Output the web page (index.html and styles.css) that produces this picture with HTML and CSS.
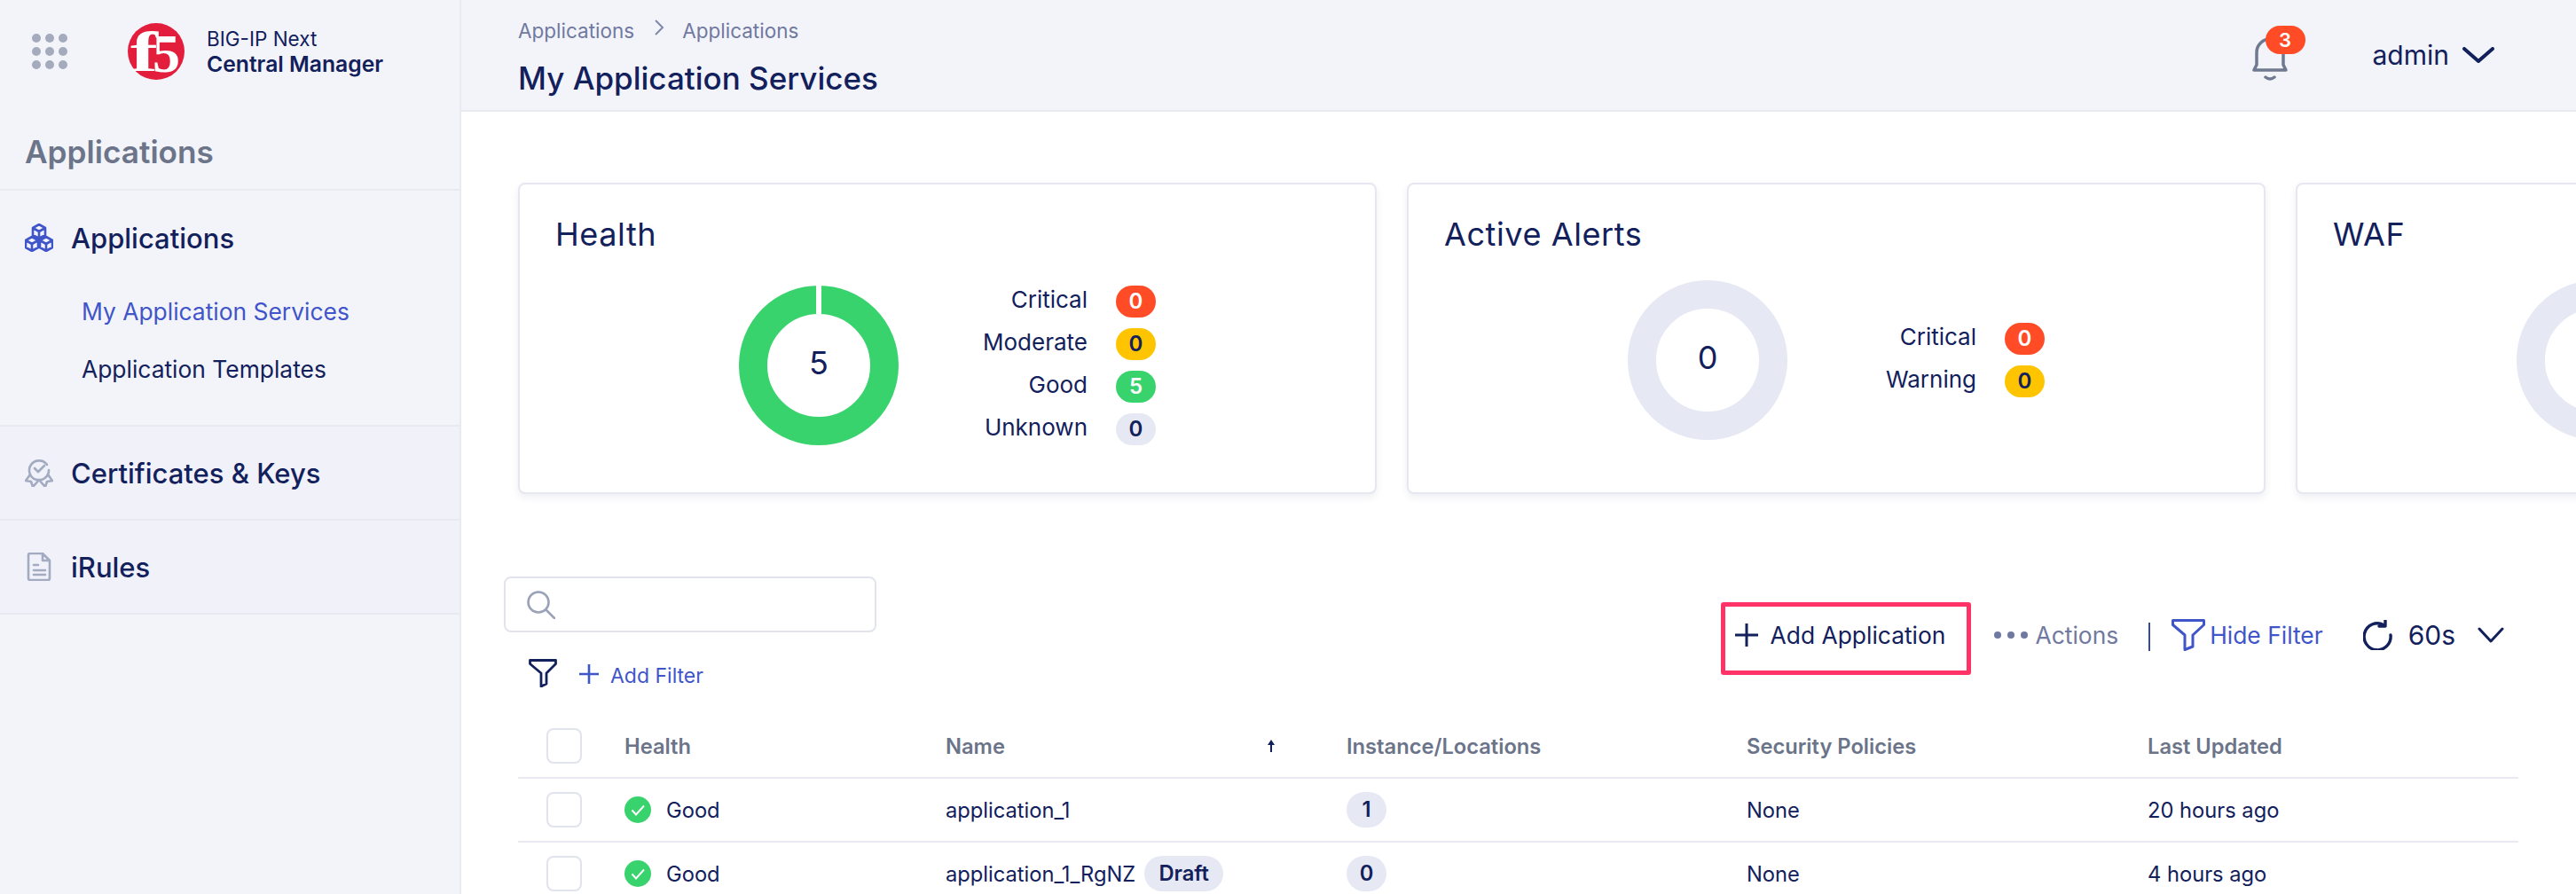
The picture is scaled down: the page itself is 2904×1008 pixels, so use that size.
FILE: index.html
```html
<!DOCTYPE html>
<html lang="en">
<head>
<meta charset="utf-8">
<title>My Application Services</title>
<link rel="stylesheet" href="styles.css">
</head>
<body>
<div class="app">
  <aside class="sidebar">
    <div class="brand">
      <div class="dots"><i></i><i></i><i></i><i></i><i></i><i></i><i></i><i></i><i></i></div>
      <svg class="logo" viewBox="0 0 64 64"><circle cx="32" cy="32" r="32" fill="#e31d3c"/><text class="logo-f" transform="scale(1.45 1)" x="2" y="54">f</text><text class="logo-5" x="28" y="55">5</text></svg>
      <div class="brand-text"><div class="brand-top">BIG-IP Next</div><div class="brand-bottom">Central Manager</div></div>
    </div>
    <div class="side-title">Applications</div>
    <section class="nav-section nav-open">
      <div class="nav-head">
        <svg class="nav-icon" viewBox="0 0 32 32" fill="none" stroke="#3f55c9" stroke-width="2.6" stroke-linejoin="round"><path d="M16 1l7 4v8l-7 4-7-4V5zM9 5l7 4 7-4M16 9v8"/><path d="M8 15l7 4v8l-7 4-7-4v-8zM1 19l7 4 7-4M8 23v8"/><path d="M24 15l7 4v8l-7 4-7-4v-8zM17 19l7 4 7-4M24 23v8"/></svg>
        <span>Applications</span>
      </div>
      <ul class="sub-list">
        <li class="sub-item sub-active">My Application Services</li>
        <li class="sub-item">Application Templates</li>
      </ul>
    </section>
    <section class="nav-section">
      <div class="nav-head">
        <svg class="nav-icon" viewBox="0 0 32 32" fill="none" stroke="#a3abc2" stroke-width="2.6" stroke-linejoin="round" stroke-linecap="round"><path d="M25 7A11 11 0 1 0 27 13"/><path d="M11 11l4 4 7-7"/><path d="M6 18L1 25l6 1 2 6 7-8 7 8 2-6 6-1-5-7"/></svg>
        <span>Certificates &amp; Keys</span>
      </div>
    </section>
    <section class="nav-section nav-last">
      <div class="nav-head">
        <svg class="nav-icon" viewBox="0 0 32 32" fill="none" stroke="#a3abc2" stroke-width="2.6" stroke-linejoin="round" stroke-linecap="round"><path d="M6 1h14l8 8v20a2 2 0 0 1-2 2H6a2 2 0 0 1-2-2V3a2 2 0 0 1 2-2zM20 1v8h8M10 14h5M10 20h13M10 25h13"/></svg>
        <span>iRules</span>
      </div>
    </section>
  </aside>

  <main class="main">
    <header class="topbar">
      <div class="crumbs-wrap">
        <div class="crumbs"><span>Applications</span><svg class="crumb-sep" viewBox="0 0 12 20" fill="none" stroke="#7f88a8" stroke-width="2"><path d="M2 2l8 8-8 8"/></svg><span>Applications</span></div>
        <h1 class="page-title">My Application Services</h1>
      </div>
      <div class="top-right">
        <div class="bell">
          <svg viewBox="0 0 40 56" fill="none" stroke="#6f7a90" stroke-width="3.500" stroke-linecap="round" stroke-linejoin="round"><path d="M2 40h36l-3-6V20a15 15 0 0 0-30 0v14zM15 48q5 4 10 0"/></svg>
          <span class="bell-badge">3</span>
        </div>
        <span class="user">admin</span>
        <svg class="user-chev" viewBox="0 0 36 18" fill="none" stroke="#12205c" stroke-width="4" stroke-linecap="round" stroke-linejoin="round"><path d="M2 2l16 14L34 2"/></svg>
      </div>
    </header>

    <div class="cards">
      <article class="card">
        <h2 class="card-title">Health</h2>
        <div class="card-body body-health">
          <div class="donut donut-good"><span>5</span></div>
          <div class="legend">
            <div class="legend-row"><span>Critical</span><b class="pill pill-red">0</b></div>
            <div class="legend-row"><span>Moderate</span><b class="pill pill-yellow">0</b></div>
            <div class="legend-row"><span>Good</span><b class="pill pill-green">5</b></div>
            <div class="legend-row"><span>Unknown</span><b class="pill pill-grey">0</b></div>
          </div>
        </div>
      </article>
      <article class="card">
        <h2 class="card-title">Active Alerts</h2>
        <div class="card-body body-alerts">
          <div class="donut"><span>0</span></div>
          <div class="legend">
            <div class="legend-row"><span>Critical</span><b class="pill pill-red">0</b></div>
            <div class="legend-row"><span>Warning</span><b class="pill pill-yellow">0</b></div>
          </div>
        </div>
      </article>
      <article class="card">
        <h2 class="card-title">WAF</h2>
        <div class="card-body body-alerts">
          <div class="donut"></div>
          <div class="legend"></div>
        </div>
      </article>
    </div>

    <div class="controls">
      <div class="controls-left">
        <div class="search">
          <svg viewBox="0 0 32 32" fill="none" stroke="#9aa2b8" stroke-width="2.600" stroke-linecap="round"><circle cx="13" cy="13" r="11.500"/><path d="M22 22l9 9"/></svg>
        </div>
        <div class="filter-row">
          <svg class="filter-icon" viewBox="0 0 32 32" fill="none" stroke="#12205c" stroke-width="2.800" stroke-linejoin="round"><path d="M1.500 1.500h29v4L20 16v12l-6 3V16L1.500 5.500z"/></svg>
          <svg class="add-plus" viewBox="0 0 22 22" fill="none" stroke="#3f55c9" stroke-width="2.600"><path d="M11 0v22M0 11h22"/></svg>
          <span class="add-filter">Add Filter</span>
        </div>
      </div>
      <div class="toolbar">
        <div class="add-box">
          <svg viewBox="0 0 26 26" fill="none" stroke="#12205c" stroke-width="3"><path d="M13 0v26M0 13h26"/></svg>
          <span>Add Application</span>
        </div>
        <div class="tool tool-actions">
          <div class="three-dots"><i></i><i></i><i></i></div>
          <span>Actions</span>
        </div>
        <div class="tool-divider"></div>
        <div class="tool tool-hide">
          <svg viewBox="0 0 38 36" fill="none" stroke="#3f55c9" stroke-width="3" stroke-linejoin="round"><path d="M1.500 1.500h35v5L24 18v13l-9 3.500V18L1.500 6.500z"/></svg>
          <span>Hide Filter</span>
        </div>
        <div class="tool tool-refresh">
          <svg viewBox="0 0 34 34" fill="none" stroke="#12205c" stroke-width="3.400" stroke-linecap="round" stroke-linejoin="round"><path d="M23 5.500A15 15 0 1 0 31 17"/><path d="M25 0v7h-7"/></svg>
          <span>60s</span>
          <svg class="refresh-chev" viewBox="0 0 30 18" fill="none" stroke="#12205c" stroke-width="3" stroke-linecap="round" stroke-linejoin="round"><path d="M2 2l13 14L28 2"/></svg>
        </div>
      </div>
    </div>

    <div class="table">
      <div class="row row-head">
        <div class="cell-check"><span class="check"></span></div>
        <div>Health</div>
        <div class="name-head">Name<svg class="sort" viewBox="0 0 10 14" fill="#12205c"><path d="M5 0l4 6H6v8H4V6H1z"/></svg></div>
        <div>Instance/Locations</div>
        <div>Security Policies</div>
        <div>Last Updated</div>
      </div>
      <div class="row">
        <div class="cell-check"><span class="check"></span></div>
        <div class="health-cell"><svg class="ok" viewBox="0 0 30 30"><circle cx="15" cy="15" r="15" fill="#39d36e"/><path d="M8.500 15.500l4.500 5 9-10" fill="none" stroke="#fff" stroke-width="2"/></svg>Good</div>
        <div>application_1</div>
        <div><b class="count">1</b></div>
        <div>None</div>
        <div>20 hours ago</div>
      </div>
      <div class="row">
        <div class="cell-check"><span class="check"></span></div>
        <div class="health-cell"><svg class="ok" viewBox="0 0 30 30"><circle cx="15" cy="15" r="15" fill="#39d36e"/><path d="M8.500 15.500l4.500 5 9-10" fill="none" stroke="#fff" stroke-width="2"/></svg>Good</div>
        <div class="name-cell">application_1_RgNZ<b class="draft">Draft</b></div>
        <div><b class="count">0</b></div>
        <div>None</div>
        <div>4 hours ago</div>
      </div>
    </div>
  </main>
</div>
</body>
</html>
```

FILE: styles.css
```css
* { box-sizing: border-box; }
html, body { margin: 0; height: 100%; overflow: hidden; }
body { font-family: Inter, "Liberation Sans", sans-serif; color: #12205c; background: #fff; }
.app { display: flex; height: 1008px; overflow: hidden; }

/* Sidebar */
.sidebar { flex: none; width: 520px; background: #f3f4fa; border-right: 2px solid #e8e9f1; }
.brand { display: flex; align-items: center; height: 116px; padding-left: 36px; }
.dots { display: grid; grid-template-columns: repeat(3, 10px); gap: 5px; }
.dots i { width: 10px; height: 10px; border-radius: 50%; background: #a3abbd; }
.logo { width: 64px; height: 64px; margin-left: 68px; overflow: visible; }
.logo-f { font: 700 64px "Liberation Serif", serif; fill: #fff; }
.logo-5 { font: 700 62px "Liberation Serif", serif; fill: #fff; }
.brand-text { margin-left: 25px; }
.brand-top { font-size: 22.5px; line-height: 28px; }
.brand-bottom { font-size: 24.7px; line-height: 28px; font-weight: 600; }
.side-title { padding: 38px 0 24px 28px; font-size: 35.2px; line-height: 35px; font-weight: 600; color: #6b7489; border-bottom: 2px solid #e8e9f1; }
.nav-section { padding: 20px 0; background: #f0f1f9; border-bottom: 2px solid #e8e9f1; }
.nav-open { padding: 21px 0 30px; background: #f3f4fa; }
.nav-head { display: flex; align-items: center; height: 64px; padding-left: 28px; font-size: 31px; font-weight: 500; }
.nav-icon { width: 32px; height: 32px; margin-right: 20px; }
.sub-list { list-style: none; margin: 19px 0 0; padding: 0; }
.sub-item { height: 65px; padding-left: 92px; font-size: 26.4px; line-height: 64px; }
.sub-active { color: #3f55c9; }

/* Top bar */
.main { flex: 1; min-width: 0; overflow: hidden; }
.topbar { display: flex; justify-content: space-between; height: 126px; padding: 0 92px 0 64px; background: #f3f4fa; border-bottom: 2px solid #e8e9f1; }
.crumbs { display: flex; align-items: center; height: 34px; margin-top: 17px; font-size: 22.5px; color: #7079a0; }
.crumb-sep { width: 12px; height: 20px; margin: 0 20px 0 22px; position: relative; top: -3px; }
.page-title { margin: 19px 0 0; font-size: 35px; line-height: 36px; font-weight: 500; }
.top-right { display: flex; align-items: center; height: 124px; }
.bell { position: relative; width: 40px; height: 56px; margin: 10px 96px 0 0; }
.bell svg { display: block; width: 40px; height: 56px; }
.bell-badge { position: absolute; left: 15px; top: -10px; width: 45px; height: 32px; border-radius: 16px; background: #ff4b26; color: #fff; font-size: 22px; font-weight: 600; line-height: 32px; text-align: center; }
.user { font-size: 30px; }
.user-chev { width: 36px; height: 18px; margin-left: 15px; }

/* Cards */
.cards { display: flex; gap: 34px; margin-top: 80px; padding-left: 64px; }
.card { flex: none; width: 968px; height: 351px; padding: 0 40px; background: #fff; border: 2px solid #e6e7f0; border-radius: 8px; box-shadow: 0 4px 8px rgba(40, 50, 100, .08); }
.card-title { margin: 36px 0 0; font-size: 36px; line-height: 40px; font-weight: 400; letter-spacing: .6px; }
.card-body { display: flex; justify-content: center; height: 180px; }
.body-health { margin-top: 38px; }
.body-alerts { margin-top: 32px; }
.donut { position: relative; flex: none; display: flex; align-items: center; justify-content: center; width: 180px; height: 180px; border: 32px solid #e6e9f3; border-radius: 50%; font-size: 36px; }
.donut span { position: relative; top: -3px; }
.donut-good { border-color: #39d36e; }
.donut-good::before { content: ""; position: absolute; left: 55px; top: -32px; width: 6px; height: 32px; background: #fff; }
.legend { flex: none; display: flex; flex-direction: column; justify-content: center; gap: 12px; width: 290px; }
.legend-row { display: flex; align-items: center; justify-content: flex-end; height: 36px; font-size: 26px; }
.legend-row span { position: relative; top: -3px; }
.pill { width: 45px; height: 36px; margin-left: 32px; border-radius: 18px; font-size: 24px; font-weight: 600; line-height: 36px; text-align: center; }
.pill-red { background: #ff4b26; color: #fff; }
.pill-yellow { background: #ffc400; }
.pill-green { background: #39d36e; color: #fff; }
.pill-grey { background: #e6e9f3; }

/* Controls */
.controls { display: flex; justify-content: space-between; height: 156px; margin-top: 93px; padding: 0 81px 0 48px; }
.search { display: flex; align-items: center; width: 420px; height: 63px; padding-left: 24px; border: 2px solid #e2e4ed; border-radius: 8px; }
.search svg { width: 32px; height: 32px; }
.filter-row { display: flex; align-items: center; height: 32px; margin-top: 30px; padding-left: 28px; }
.filter-icon { width: 32px; height: 32px; }
.add-plus { width: 22px; height: 22px; margin: 2px 13px 0 25px; }
.add-filter { position: relative; top: 3px; font-size: 23px; color: #3f55c9; }
.toolbar { display: flex; align-items: flex-start; margin-top: 29px; font-size: 26.4px; }
.add-box { display: flex; align-items: center; width: 282px; height: 82px; padding: 0 0 8px 11px; border: 5px solid #ff3366; border-radius: 3px; }
.add-box svg { width: 26px; height: 26px; margin-right: 14px; }
.tool { display: flex; align-items: center; height: 74px; }
.tool-actions { margin-left: 26px; color: #7079a0; }
.three-dots { display: flex; gap: 7px; margin-right: 9px; }
.three-dots i { width: 8px; height: 8px; border-radius: 50%; background: #7079a0; }
.tool-divider { width: 2px; height: 32px; margin: 23px 24px 0 34px; background: #3a4a8c; }
.tool-hide { color: #3f55c9; }
.tool-hide svg { width: 38px; height: 36px; margin-right: 5px; }
.tool-refresh { margin-left: 45px; font-size: 30px; }
.tool-refresh svg { width: 34px; height: 34px; margin-right: 17px; }
.tool-refresh .refresh-chev { width: 30px; height: 18px; margin: 0 0 0 25px; }

/* Table */
.table { width: 2255px; margin-left: 64px; }
.row { display: grid; grid-template-columns: 120px 362px 452px 451px 452px 1fr; align-items: center; height: 72px; border-bottom: 2px solid #e8e9f1; font-size: 23.7px; }
.row-head { font-weight: 600; color: #6b7489; }
.cell-check { padding-left: 32px; }
.check { display: block; width: 40px; height: 40px; background: #fff; border: 2px solid #e2e4ed; border-radius: 8px; }
.name-head { display: flex; align-items: center; justify-content: space-between; padding-right: 80px; }
.sort { width: 10px; height: 14px; }
.health-cell { display: flex; align-items: center; }
.ok { width: 30px; height: 30px; margin-right: 17px; }
.name-cell { display: flex; align-items: center; }
.count { display: block; width: 45px; height: 40px; border-radius: 20px; background: #e6e9f3; font-weight: 600; line-height: 40px; text-align: center; }
.draft { width: 89px; height: 40px; margin-left: 10px; border-radius: 20px; background: #e6e9f3; font-weight: 600; line-height: 40px; text-align: center; }
```
